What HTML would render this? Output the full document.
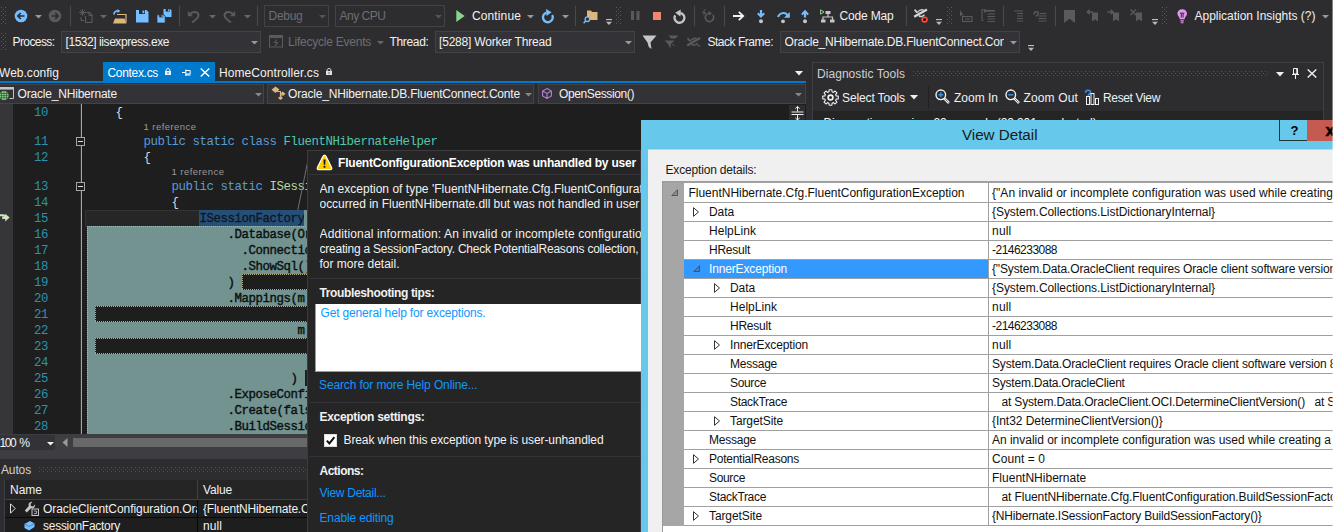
<!DOCTYPE html>
<html><head><meta charset="utf-8"><title>VS</title><style>
html,body{margin:0;padding:0;}
body{width:1335px;height:532px;overflow:hidden;background:#2d2d30;position:relative;font-family:"Liberation Sans", sans-serif;font-size:12px;}
#r{position:absolute;left:0;top:0;width:1335px;height:532px;overflow:hidden;}
#r div,#r span.t,#r svg{position:absolute;}
#r span.t{white-space:pre;}
#r div.c{overflow:hidden;}
#r span.m{font-family:"Liberation Mono", monospace;}
</style></head><body><div id="r">
<svg style="left:1px;top:7px" width="5" height="18" viewBox="0 0 5 18"><rect x="0" y="0" width="1" height="1" fill="#5c5c60"/><rect x="4" y="0" width="1" height="1" fill="#5c5c60"/><rect x="2" y="2" width="1" height="1" fill="#5c5c60"/><rect x="0" y="4" width="1" height="1" fill="#5c5c60"/><rect x="4" y="4" width="1" height="1" fill="#5c5c60"/><rect x="2" y="6" width="1" height="1" fill="#5c5c60"/><rect x="0" y="8" width="1" height="1" fill="#5c5c60"/><rect x="4" y="8" width="1" height="1" fill="#5c5c60"/><rect x="2" y="10" width="1" height="1" fill="#5c5c60"/><rect x="0" y="12" width="1" height="1" fill="#5c5c60"/><rect x="4" y="12" width="1" height="1" fill="#5c5c60"/><rect x="2" y="14" width="1" height="1" fill="#5c5c60"/><rect x="0" y="16" width="1" height="1" fill="#5c5c60"/><rect x="4" y="16" width="1" height="1" fill="#5c5c60"/></svg>
<div style="left:70px;top:6px;width:1px;height:20px;background:#4a4a4e;"></div>
<div style="left:179px;top:6px;width:1px;height:20px;background:#4a4a4e;"></div>
<div style="left:257px;top:6px;width:1px;height:20px;background:#4a4a4e;"></div>
<div style="left:264px;top:5px;width:63px;height:20px;background:#2d2d30;border:1px solid #434346;"></div>
<span class="t" id="t1" style="left:268.5px;top:8.0px;font-size:12px;line-height:16px;color:#6e6e70;letter-spacing:-0.275px;">Debug</span>
<svg style="left:319px;top:15px" width="7" height="4" viewBox="0 0 7 4"><path d="M0 0H7L3.5 3.5Z" fill="#555"/></svg>
<div style="left:335px;top:5px;width:108px;height:20px;background:#2d2d30;border:1px solid #434346;"></div>
<span class="t" id="t2" style="left:339.5px;top:8.0px;font-size:12px;line-height:16px;color:#6e6e70;letter-spacing:-0.480px;">Any CPU</span>
<svg style="left:435px;top:15px" width="7" height="4" viewBox="0 0 7 4"><path d="M0 0H7L3.5 3.5Z" fill="#555"/></svg>
<span class="t" id="t3" style="left:472px;top:8.0px;font-size:12px;line-height:16px;color:#f1f1f1;letter-spacing:0.119px;">Continue</span>
<svg style="left:527px;top:15px" width="7" height="4" viewBox="0 0 7 4"><path d="M0 0H7L3.5 3.5Z" fill="#999"/></svg>
<svg style="left:562px;top:15px" width="7" height="4" viewBox="0 0 7 4"><path d="M0 0H7L3.5 3.5Z" fill="#999"/></svg>
<div style="left:575px;top:6px;width:1px;height:20px;background:#4a4a4e;"></div>
<svg style="left:615.5px;top:7px" width="5" height="18" viewBox="0 0 5 18"><rect x="0" y="0" width="1" height="1" fill="#5c5c60"/><rect x="4" y="0" width="1" height="1" fill="#5c5c60"/><rect x="2" y="2" width="1" height="1" fill="#5c5c60"/><rect x="0" y="4" width="1" height="1" fill="#5c5c60"/><rect x="4" y="4" width="1" height="1" fill="#5c5c60"/><rect x="2" y="6" width="1" height="1" fill="#5c5c60"/><rect x="0" y="8" width="1" height="1" fill="#5c5c60"/><rect x="4" y="8" width="1" height="1" fill="#5c5c60"/><rect x="2" y="10" width="1" height="1" fill="#5c5c60"/><rect x="0" y="12" width="1" height="1" fill="#5c5c60"/><rect x="4" y="12" width="1" height="1" fill="#5c5c60"/><rect x="2" y="14" width="1" height="1" fill="#5c5c60"/><rect x="0" y="16" width="1" height="1" fill="#5c5c60"/><rect x="4" y="16" width="1" height="1" fill="#5c5c60"/></svg>
<div style="left:694px;top:6px;width:1px;height:20px;background:#4a4a4e;"></div>
<div style="left:724px;top:6px;width:1px;height:20px;background:#4a4a4e;"></div>
<span class="t" id="t4" style="left:839.5px;top:8.0px;font-size:12px;line-height:16px;color:#f1f1f1;letter-spacing:-0.172px;">Code Map</span>
<div style="left:906px;top:6px;width:1px;height:20px;background:#4a4a4e;"></div>
<svg style="left:947px;top:7px" width="5" height="18" viewBox="0 0 5 18"><rect x="0" y="0" width="1" height="1" fill="#5c5c60"/><rect x="4" y="0" width="1" height="1" fill="#5c5c60"/><rect x="2" y="2" width="1" height="1" fill="#5c5c60"/><rect x="0" y="4" width="1" height="1" fill="#5c5c60"/><rect x="4" y="4" width="1" height="1" fill="#5c5c60"/><rect x="2" y="6" width="1" height="1" fill="#5c5c60"/><rect x="0" y="8" width="1" height="1" fill="#5c5c60"/><rect x="4" y="8" width="1" height="1" fill="#5c5c60"/><rect x="2" y="10" width="1" height="1" fill="#5c5c60"/><rect x="0" y="12" width="1" height="1" fill="#5c5c60"/><rect x="4" y="12" width="1" height="1" fill="#5c5c60"/><rect x="2" y="14" width="1" height="1" fill="#5c5c60"/><rect x="0" y="16" width="1" height="1" fill="#5c5c60"/><rect x="4" y="16" width="1" height="1" fill="#5c5c60"/></svg>
<div style="left:1003px;top:6px;width:1px;height:20px;background:#4a4a4e;"></div>
<div style="left:1055px;top:6px;width:1px;height:20px;background:#4a4a4e;"></div>
<svg style="left:1162px;top:7px" width="5" height="18" viewBox="0 0 5 18"><rect x="0" y="0" width="1" height="1" fill="#5c5c60"/><rect x="4" y="0" width="1" height="1" fill="#5c5c60"/><rect x="2" y="2" width="1" height="1" fill="#5c5c60"/><rect x="0" y="4" width="1" height="1" fill="#5c5c60"/><rect x="4" y="4" width="1" height="1" fill="#5c5c60"/><rect x="2" y="6" width="1" height="1" fill="#5c5c60"/><rect x="0" y="8" width="1" height="1" fill="#5c5c60"/><rect x="4" y="8" width="1" height="1" fill="#5c5c60"/><rect x="2" y="10" width="1" height="1" fill="#5c5c60"/><rect x="0" y="12" width="1" height="1" fill="#5c5c60"/><rect x="4" y="12" width="1" height="1" fill="#5c5c60"/><rect x="2" y="14" width="1" height="1" fill="#5c5c60"/><rect x="0" y="16" width="1" height="1" fill="#5c5c60"/><rect x="4" y="16" width="1" height="1" fill="#5c5c60"/></svg>
<span class="t" id="t5" style="left:1194.5px;top:8.0px;font-size:12px;line-height:16px;color:#f1f1f1;letter-spacing:-0.017px;">Application Insights (?)</span>
<svg style="left:1322px;top:15px" width="7" height="4" viewBox="0 0 7 4"><path d="M0 0H7L3.5 3.5Z" fill="#999"/></svg>
<svg style="left:35px;top:15px" width="7" height="4" viewBox="0 0 7 4"><path d="M0 0H7L3.5 3.5Z" fill="#999"/></svg>
<svg style="left:100px;top:15px" width="7" height="4" viewBox="0 0 7 4"><path d="M0 0H7L3.5 3.5Z" fill="#666"/></svg>
<svg style="left:209px;top:15px" width="7" height="4" viewBox="0 0 7 4"><path d="M0 0H7L3.5 3.5Z" fill="#666"/></svg>
<svg style="left:244px;top:15px" width="7" height="4" viewBox="0 0 7 4"><path d="M0 0H7L3.5 3.5Z" fill="#666"/></svg>
<svg style="left:1px;top:33px" width="5" height="18" viewBox="0 0 5 18"><rect x="0" y="0" width="1" height="1" fill="#5c5c60"/><rect x="4" y="0" width="1" height="1" fill="#5c5c60"/><rect x="2" y="2" width="1" height="1" fill="#5c5c60"/><rect x="0" y="4" width="1" height="1" fill="#5c5c60"/><rect x="4" y="4" width="1" height="1" fill="#5c5c60"/><rect x="2" y="6" width="1" height="1" fill="#5c5c60"/><rect x="0" y="8" width="1" height="1" fill="#5c5c60"/><rect x="4" y="8" width="1" height="1" fill="#5c5c60"/><rect x="2" y="10" width="1" height="1" fill="#5c5c60"/><rect x="0" y="12" width="1" height="1" fill="#5c5c60"/><rect x="4" y="12" width="1" height="1" fill="#5c5c60"/><rect x="2" y="14" width="1" height="1" fill="#5c5c60"/><rect x="0" y="16" width="1" height="1" fill="#5c5c60"/><rect x="4" y="16" width="1" height="1" fill="#5c5c60"/></svg>
<span class="t" id="t6" style="left:12.5px;top:34.0px;font-size:12px;line-height:16px;color:#f1f1f1;letter-spacing:-0.586px;">Process:</span>
<div style="left:61px;top:31px;width:198px;height:20px;background:#333337;border:1px solid #434346;"></div>
<span class="t" id="t7" style="left:65.5px;top:34.0px;font-size:12px;line-height:16px;color:#f1f1f1;letter-spacing:-0.440px;">[1532] iisexpress.exe</span>
<svg style="left:251px;top:41px" width="7" height="4" viewBox="0 0 7 4"><path d="M0 0H7L3.5 3.5Z" fill="#999"/></svg>
<span class="t" id="t8" style="left:288px;top:34.0px;font-size:12px;line-height:16px;color:#6e6e70;letter-spacing:-0.232px;">Lifecycle Events</span>
<svg style="left:377px;top:41px" width="7" height="4" viewBox="0 0 7 4"><path d="M0 0H7L3.5 3.5Z" fill="#666"/></svg>
<span class="t" id="t9" style="left:389.5px;top:34.0px;font-size:12px;line-height:16px;color:#f1f1f1;letter-spacing:-0.337px;">Thread:</span>
<div style="left:435px;top:31px;width:198px;height:20px;background:#333337;border:1px solid #434346;"></div>
<span class="t" id="t10" style="left:439px;top:34.0px;font-size:12px;line-height:16px;color:#f1f1f1;letter-spacing:-0.190px;">[5288] Worker Thread</span>
<svg style="left:625px;top:41px" width="7" height="4" viewBox="0 0 7 4"><path d="M0 0H7L3.5 3.5Z" fill="#999"/></svg>
<span class="t" id="t11" style="left:707.5px;top:34.0px;font-size:12px;line-height:16px;color:#f1f1f1;letter-spacing:-0.488px;">Stack Frame:</span>
<div style="left:780px;top:31px;width:238px;height:20px;background:#333337;border:1px solid #434346;"></div>
<span class="t" id="t12" style="left:784.5px;top:34.0px;font-size:12px;line-height:16px;color:#f1f1f1;width:219.5px;overflow:hidden;letter-spacing:-0.205px;">Oracle_NHibernate.DB.FluentConnect.Context</span>
<svg style="left:1010px;top:41px" width="7" height="4" viewBox="0 0 7 4"><path d="M0 0H7L3.5 3.5Z" fill="#999"/></svg>
<span class="t" id="t13" style="left:-1px;top:65.0px;font-size:12px;line-height:16px;color:#f1f1f1;letter-spacing:0.019px;">Web.config</span>
<div style="left:103px;top:62px;width:112px;height:20px;background:#007acc;"></div>
<span class="t" id="t14" style="left:107.5px;top:65.0px;font-size:12px;line-height:16px;color:#fff;letter-spacing:-0.318px;">Contex.cs</span>
<span class="t" id="t15" style="left:219px;top:65.0px;font-size:12px;line-height:16px;color:#f1f1f1;letter-spacing:0.076px;">HomeController.cs</span>
<div style="left:0px;top:81px;width:806px;height:2px;background:#007acc;"></div>
<svg style="left:795px;top:71px" width="8" height="5" viewBox="0 0 8 5"><path d="M0 0H8L4.0 4.5Z" fill="#f1f1f1"/></svg>
<div style="left:0px;top:83px;width:806px;height:21px;background:#2d2d30;"></div>
<div style="left:-1px;top:84px;width:263px;height:18px;background:#333337;border:1px solid #434346;"></div>
<div style="left:267px;top:84px;width:265px;height:18px;background:#333337;border:1px solid #434346;"></div>
<div style="left:538px;top:84px;width:266px;height:18px;background:#333337;border:1px solid #434346;"></div>
<span class="t" id="t16" style="left:17.5px;top:86.0px;font-size:12px;line-height:16px;color:#f1f1f1;letter-spacing:-0.189px;">Oracle_NHibernate</span>
<svg style="left:255px;top:93px" width="7" height="4" viewBox="0 0 7 4"><path d="M0 0H7L3.5 3.5Z" fill="#888"/></svg>
<span class="t" id="t17" style="left:288px;top:86.0px;font-size:12px;line-height:16px;color:#f1f1f1;width:234px;overflow:hidden;letter-spacing:-0.187px;">Oracle_NHibernate.DB.FluentConnect.Conte</span>
<svg style="left:525px;top:93px" width="7" height="4" viewBox="0 0 7 4"><path d="M0 0H7L3.5 3.5Z" fill="#888"/></svg>
<span class="t" id="t18" style="left:559px;top:86.0px;font-size:12px;line-height:16px;color:#f1f1f1;letter-spacing:-0.388px;">OpenSession()</span>
<svg style="left:795px;top:93px" width="7" height="4" viewBox="0 0 7 4"><path d="M0 0H7L3.5 3.5Z" fill="#888"/></svg>
<div style="left:0px;top:104px;width:806px;height:330px;background:#1e1e1e;"></div>
<div style="left:0px;top:104px;width:13px;height:330px;background:#363638;"></div>
<div style="left:80px;top:104px;width:1px;height:330px;background:#2e2e2e;"></div>
<div style="left:81px;top:104px;width:1px;height:330px;background:#a6a6a6;"></div>
<div style="left:85px;top:210px;width:222px;height:15px;background:#262626;border:1px solid #333;border-right:none;"></div>
<div style="left:87px;top:226px;width:220px;height:208px;background:#739390;"></div>
<div style="left:87px;top:226px;width:1px;height:208px;background:repeating-linear-gradient(to bottom,#b9b48c 0,#b9b48c 1px,transparent 1px,transparent 2px);"></div>
<div style="left:87px;top:226px;width:220px;height:1px;background:repeating-linear-gradient(to right,#b9b48c 0,#b9b48c 1px,transparent 1px,transparent 2px);"></div>
<div style="left:242px;top:274px;width:66px;height:16px;background:#1e1e1e;"></div>
<div style="left:242px;top:274px;width:66px;height:1px;background:repeating-linear-gradient(to right,#b0a684 0,#b0a684 1px,transparent 1px,transparent 2px);"></div>
<div style="left:242px;top:289px;width:66px;height:1px;background:repeating-linear-gradient(to right,#b0a684 0,#b0a684 1px,transparent 1px,transparent 2px);"></div>
<div style="left:242px;top:274px;width:1px;height:16px;background:repeating-linear-gradient(to bottom,#b0a684 0,#b0a684 1px,transparent 1px,transparent 2px);"></div>
<div style="left:95px;top:306px;width:213px;height:16px;background:#1e1e1e;"></div>
<div style="left:95px;top:306px;width:213px;height:1px;background:repeating-linear-gradient(to right,#b0a684 0,#b0a684 1px,transparent 1px,transparent 2px);"></div>
<div style="left:95px;top:321px;width:213px;height:1px;background:repeating-linear-gradient(to right,#b0a684 0,#b0a684 1px,transparent 1px,transparent 2px);"></div>
<div style="left:95px;top:306px;width:1px;height:16px;background:repeating-linear-gradient(to bottom,#b0a684 0,#b0a684 1px,transparent 1px,transparent 2px);"></div>
<div style="left:95px;top:338px;width:213px;height:16px;background:#1e1e1e;"></div>
<div style="left:95px;top:338px;width:213px;height:1px;background:repeating-linear-gradient(to right,#b0a684 0,#b0a684 1px,transparent 1px,transparent 2px);"></div>
<div style="left:95px;top:353px;width:213px;height:1px;background:repeating-linear-gradient(to right,#b0a684 0,#b0a684 1px,transparent 1px,transparent 2px);"></div>
<div style="left:95px;top:338px;width:1px;height:16px;background:repeating-linear-gradient(to bottom,#b0a684 0,#b0a684 1px,transparent 1px,transparent 2px);"></div>
<div style="left:305px;top:370px;width:3px;height:16px;background:#1e1e1e;"></div>
<div style="left:199px;top:210px;width:105.5px;height:16px;background:#264f78;"></div>
<span class="t m" id="t19" style="left:34px;top:104.5px;font-size:12.4px;line-height:16px;color:#2b91af;letter-spacing:-0.438px;">10</span>
<span class="t m" id="t20" style="left:34px;top:133.5px;font-size:12.4px;line-height:16px;color:#2b91af;letter-spacing:-0.438px;">11</span>
<span class="t m" id="t21" style="left:34px;top:149.5px;font-size:12.4px;line-height:16px;color:#2b91af;letter-spacing:-0.438px;">12</span>
<span class="t m" id="t22" style="left:34px;top:178.5px;font-size:12.4px;line-height:16px;color:#2b91af;letter-spacing:-0.438px;">13</span>
<span class="t m" id="t23" style="left:34px;top:194.5px;font-size:12.4px;line-height:16px;color:#2b91af;letter-spacing:-0.438px;">14</span>
<span class="t m" id="t24" style="left:34px;top:210.5px;font-size:12.4px;line-height:16px;color:#2b91af;letter-spacing:-0.438px;">15</span>
<span class="t m" id="t25" style="left:34px;top:226.5px;font-size:12.4px;line-height:16px;color:#2b91af;letter-spacing:-0.438px;">16</span>
<span class="t m" id="t26" style="left:34px;top:242.5px;font-size:12.4px;line-height:16px;color:#2b91af;letter-spacing:-0.438px;">17</span>
<span class="t m" id="t27" style="left:34px;top:258.5px;font-size:12.4px;line-height:16px;color:#2b91af;letter-spacing:-0.438px;">18</span>
<span class="t m" id="t28" style="left:34px;top:274.5px;font-size:12.4px;line-height:16px;color:#2b91af;letter-spacing:-0.438px;">19</span>
<span class="t m" id="t29" style="left:34px;top:290.5px;font-size:12.4px;line-height:16px;color:#2b91af;letter-spacing:-0.438px;">20</span>
<span class="t m" id="t30" style="left:34px;top:306.5px;font-size:12.4px;line-height:16px;color:#2b91af;letter-spacing:-0.438px;">21</span>
<span class="t m" id="t31" style="left:34px;top:322.5px;font-size:12.4px;line-height:16px;color:#2b91af;letter-spacing:-0.438px;">22</span>
<span class="t m" id="t32" style="left:34px;top:338.5px;font-size:12.4px;line-height:16px;color:#2b91af;letter-spacing:-0.438px;">23</span>
<span class="t m" id="t33" style="left:34px;top:354.5px;font-size:12.4px;line-height:16px;color:#2b91af;letter-spacing:-0.438px;">24</span>
<span class="t m" id="t34" style="left:34px;top:370.5px;font-size:12.4px;line-height:16px;color:#2b91af;letter-spacing:-0.438px;">25</span>
<span class="t m" id="t35" style="left:34px;top:386.5px;font-size:12.4px;line-height:16px;color:#2b91af;letter-spacing:-0.438px;">26</span>
<span class="t m" id="t36" style="left:34px;top:402.5px;font-size:12.4px;line-height:16px;color:#2b91af;letter-spacing:-0.438px;">27</span>
<span class="t m" id="t37" style="left:34px;top:418.5px;font-size:12.4px;line-height:16px;color:#2b91af;letter-spacing:-0.438px;">28</span>
<span class="t m" id="t38" style="left:115.5px;top:104.5px;font-size:12.4px;line-height:16px;color:#dcdcdc;">{</span>
<span class="t" id="t39" style="left:143.5px;top:119.0px;font-size:9.5px;line-height:16px;color:#999;letter-spacing:0.449px;">1 reference</span>
<span class="t m" id="t40" style="left:143.5px;top:133.5px;font-size:12.4px;line-height:16px;color:#569cd6;letter-spacing:-0.436px;">public static class</span>
<span class="t m" id="t41" style="left:283.5px;top:133.5px;font-size:12.4px;line-height:16px;color:#4ec9b0;letter-spacing:-0.436px;">FluentNHibernateHelper</span>
<span class="t m" id="t42" style="left:143.5px;top:149.5px;font-size:12.4px;line-height:16px;color:#dcdcdc;">{</span>
<span class="t" id="t43" style="left:171.5px;top:164.0px;font-size:9.5px;line-height:16px;color:#999;letter-spacing:0.449px;">1 reference</span>
<span class="t m" id="t44" style="left:171.5px;top:178.5px;font-size:12.4px;line-height:16px;color:#569cd6;letter-spacing:-0.436px;">public static</span>
<span class="t m" id="t45" style="left:269.5px;top:178.5px;font-size:12.4px;line-height:16px;color:#b8d7a3;letter-spacing:-0.436px;">ISessionFactory</span>
<span class="t m" id="t46" style="left:171.5px;top:194.5px;font-size:12.4px;line-height:16px;color:#dcdcdc;">{</span>
<span class="t m" id="t47" style="left:199.5px;top:210.5px;font-size:12.4px;line-height:16px;color:#0c1624;-webkit-text-stroke:0.3px #0c1624;letter-spacing:-0.436px;">ISessionFactory</span>
<span class="t m" id="t48" style="left:227.5px;top:226.5px;font-size:12.4px;line-height:16px;color:#0a1010;-webkit-text-stroke:0.4px #0a1010;letter-spacing:-0.437px;">.Database(Oracle</span>
<span class="t m" id="t49" style="left:241.5px;top:242.5px;font-size:12.4px;line-height:16px;color:#0a1010;-webkit-text-stroke:0.4px #0a1010;letter-spacing:-0.436px;">.ConnectionS</span>
<span class="t m" id="t50" style="left:241.5px;top:258.5px;font-size:12.4px;line-height:16px;color:#0a1010;-webkit-text-stroke:0.4px #0a1010;letter-spacing:-0.436px;">.ShowSql()</span>
<span class="t m" id="t51" style="left:227.5px;top:274.5px;font-size:12.4px;line-height:16px;color:#0a1010;-webkit-text-stroke:0.4px #0a1010;">)</span>
<span class="t m" id="t52" style="left:227.5px;top:290.5px;font-size:12.4px;line-height:16px;color:#0a1010;-webkit-text-stroke:0.4px #0a1010;letter-spacing:-0.436px;">.Mappings(m =&gt;</span>
<span class="t m" id="t53" style="left:297.5px;top:322.5px;font-size:12.4px;line-height:16px;color:#0a1010;-webkit-text-stroke:0.4px #0a1010;letter-spacing:-0.438px;">m.F</span>
<span class="t m" id="t54" style="left:290.5px;top:370.5px;font-size:12.4px;line-height:16px;color:#0a1010;-webkit-text-stroke:0.4px #0a1010;">)</span>
<span class="t m" id="t55" style="left:227.5px;top:386.5px;font-size:12.4px;line-height:16px;color:#0a1010;-webkit-text-stroke:0.4px #0a1010;letter-spacing:-0.436px;">.ExposeConfiguration</span>
<span class="t m" id="t56" style="left:227.5px;top:402.5px;font-size:12.4px;line-height:16px;color:#0a1010;-webkit-text-stroke:0.4px #0a1010;letter-spacing:-0.436px;">.Create(false,</span>
<span class="t m" id="t57" style="left:227.5px;top:418.5px;font-size:12.4px;line-height:16px;color:#0a1010;-webkit-text-stroke:0.4px #0a1010;letter-spacing:-0.436px;">.BuildSessionFactory</span>
<div style="left:76px;top:137px;width:7px;height:7px;background:#1e1e1e;border:1px solid #a5a5a5;"></div>
<div style="left:78px;top:141px;width:5px;height:1px;background:#dcdcdc;"></div>
<div style="left:76px;top:182px;width:7px;height:7px;background:#1e1e1e;border:1px solid #a5a5a5;"></div>
<div style="left:78px;top:186px;width:5px;height:1px;background:#dcdcdc;"></div>
<div style="left:0px;top:434px;width:806px;height:16px;background:#3e3e42;"></div>
<div style="left:0px;top:435px;width:55px;height:15px;background:#333337;"></div>
<span class="t" id="t58" style="left:-0.5px;top:434.5px;font-size:12px;line-height:16px;color:#f1f1f1;letter-spacing:-1.410px;">100</span>
<span class="t" id="t59" style="left:19.2px;top:434.5px;font-size:12.2px;line-height:16px;color:#f1f1f1;">%</span>
<svg style="left:47px;top:442px" width="7" height="4" viewBox="0 0 7 4"><path d="M0 0H7L3.5 3.5Z" fill="#f1f1f1"/></svg>
<svg style="left:62px;top:438px" width="6" height="9" viewBox="0 0 6 9"><path d="M5.5 0V9L0.5 4.5Z" fill="#999"/></svg>
<div style="left:73px;top:438px;width:700px;height:9px;background:#686868;"></div>
<div style="left:0px;top:450px;width:806px;height:9px;background:#3e3e42;"></div>
<div style="left:0px;top:459px;width:806px;height:73px;background:#2d2d30;"></div>
<span class="t" id="t60" style="left:1px;top:462.0px;font-size:12px;line-height:16px;color:#d0d0d0;letter-spacing:-0.138px;">Autos</span>
<svg style="left:39px;top:467px" width="270" height="5" viewBox="0 0 270 5"><defs><pattern id="hg39_467" width="4" height="4" patternUnits="userSpaceOnUse"><rect x="0" y="0" width="1" height="1" fill="#505055"/><rect x="2" y="2" width="1" height="1" fill="#505055"/></pattern></defs><rect width="270" height="5" fill="url(#hg39_467)"/></svg>
<div style="left:5px;top:480px;width:801px;height:19px;background:#252526;"></div>
<div style="left:5px;top:500px;width:801px;height:32px;background:#1e1e1e;"></div>
<div style="left:4px;top:480px;width:1px;height:52px;background:#3f3f46;"></div>
<div style="left:5px;top:499px;width:801px;height:1px;background:#3f3f46;"></div>
<div style="left:197px;top:480px;width:1px;height:19px;background:#3f3f46;"></div>
<div style="left:197px;top:500px;width:1px;height:32px;background:#060606;"></div>
<span class="t" id="t61" style="left:10px;top:482.0px;font-size:12px;line-height:16px;color:#f1f1f1;letter-spacing:-0.004px;">Name</span>
<span class="t" id="t62" style="left:203px;top:482.0px;font-size:12px;line-height:16px;color:#f1f1f1;letter-spacing:-0.163px;">Value</span>
<div style="left:5px;top:517px;width:801px;height:1px;background:#0a0a0a;"></div>
<span class="t" id="t63" style="left:43px;top:500.5px;font-size:12px;line-height:16px;color:#f1f1f1;width:153.5px;overflow:hidden;letter-spacing:-0.056px;">OracleClientConfiguration.OracleClient</span>
<span class="t" id="t64" style="left:203px;top:500.5px;font-size:12px;line-height:16px;color:#f1f1f1;width:110px;overflow:hidden;letter-spacing:-0.188px;">{FluentNHibernate.Cfg</span>
<span class="t" id="t65" style="left:43px;top:518.0px;font-size:12px;line-height:16px;color:#f1f1f1;letter-spacing:-0.265px;">sessionFactory</span>
<span class="t" id="t66" style="left:203px;top:518.0px;font-size:12px;line-height:16px;color:#f1f1f1;letter-spacing:0.078px;">null</span>
<div style="left:812px;top:62px;width:510px;height:60px;background:#2d2d30;border:1px solid #3f3f46;"></div>
<span class="t" id="t67" style="left:817px;top:65.5px;font-size:12px;line-height:16px;color:#d0d0d0;letter-spacing:0.052px;">Diagnostic Tools</span>
<svg style="left:913px;top:71px" width="355" height="5" viewBox="0 0 355 5"><defs><pattern id="hg913_71" width="4" height="4" patternUnits="userSpaceOnUse"><rect x="0" y="0" width="1" height="1" fill="#505055"/><rect x="2" y="2" width="1" height="1" fill="#505055"/></pattern></defs><rect width="355" height="5" fill="url(#hg913_71)"/></svg>
<svg style="left:1276px;top:71.5px" width="8" height="5" viewBox="0 0 8 5"><path d="M0 0H8L4.0 4.5Z" fill="#f1f1f1"/></svg>
<span class="t" id="t68" style="left:842px;top:89.5px;font-size:12px;line-height:16px;color:#f1f1f1;letter-spacing:-0.124px;">Select Tools</span>
<svg style="left:910px;top:94.8px" width="8" height="5" viewBox="0 0 8 5"><path d="M0 0H8L4.0 4.5Z" fill="#f1f1f1"/></svg>
<div style="left:928px;top:86px;width:1px;height:22px;background:#202022;"></div>
<span class="t" id="t69" style="left:954px;top:89.5px;font-size:12px;line-height:16px;color:#f1f1f1;letter-spacing:-0.002px;">Zoom In</span>
<span class="t" id="t70" style="left:1023.5px;top:89.5px;font-size:12px;line-height:16px;color:#f1f1f1;letter-spacing:0.143px;">Zoom Out</span>
<span class="t" id="t71" style="left:1103px;top:89.5px;font-size:12px;line-height:16px;color:#f1f1f1;letter-spacing:-0.348px;">Reset View</span>
<div style="left:813px;top:111px;width:510px;height:12px;background:#252526;"></div>
<span class="t" id="t72" style="left:823.5px;top:115.2px;font-size:12px;line-height:16px;color:#fff;letter-spacing:-0.127px;">Diagnostics session: 22 seconds (22.201 s selected)</span>
<svg style="left:14px;top:9px" width="14" height="14" viewBox="0 0 14 14"><circle cx="7" cy="7" r="6.3" fill="#75beff"/><path d="M10.5 7H4M6.8 4L3.8 7L6.8 10" stroke="#2d2d30" stroke-width="1.7" fill="none"/></svg>
<svg style="left:48px;top:9px" width="14" height="14" viewBox="0 0 14 14"><circle cx="7" cy="7" r="6.3" fill="#5a5a5d"/><path d="M3.5 7H10M7.2 4L10.2 7L7.2 10" stroke="#2d2d30" stroke-width="1.7" fill="none"/></svg>
<svg style="left:79px;top:9px" width="14" height="14" viewBox="0 0 14 14"><path d="M6.5 3.5H10.5L13 6V13.5H6.5V7" fill="none" stroke="#5a5a5d" stroke-width="1.1"/><path d="M10 3.5V6.5H13" fill="none" stroke="#5a5a5d" stroke-width="1"/><path d="M3.5 0V7M0 3.5H7M1 1L6 6M6 1L1 6" stroke="#5a5a5d" stroke-width="0.9"/><path d="M2 8V11.5H5" stroke="#5a5a5d" fill="none" stroke-width="1"/></svg>
<svg style="left:112px;top:8.5px" width="16" height="15" viewBox="0 0 16 15"><path d="M5 5.5H14V13.5" fill="none" stroke="#dcb67a" stroke-width="1.2"/><path d="M3 9.5H12.5L14.5 14.5H1Z" fill="#dcb67a"/><path d="M2 5.5C2 2.5 4 1.8 6.5 1.8" stroke="#75beff" stroke-width="1.6" fill="none"/><path d="M5.5 0L8.3 2L5.5 4Z" fill="#75beff"/></svg>
<svg style="left:135.5px;top:9.5px" width="13" height="13" viewBox="0 0 13 13"><path d="M0 0H10.5L12.5 2V12.5H0Z" fill="#75beff"/><rect x="3" y="0" width="6" height="4" fill="#2d2d30"/><rect x="6.5" y="0.6" width="1.8" height="2.6" fill="#75beff"/></svg>
<svg style="left:157px;top:9px" width="15" height="14" viewBox="0 0 15 14"><path d="M6.5 0H13L14.5 1.3V8H6.5Z" fill="#75beff"/><rect x="8.7" y="0" width="4" height="2.6" fill="#2d2d30"/><rect x="11" y="0.4" width="1.2" height="1.7" fill="#75beff"/><path d="M0 5.8H6.6L8.2 7.2V14H0Z" fill="#75beff" stroke="#2d2d30" stroke-width="0.8"/><rect x="2.2" y="5.6" width="4" height="2.8" fill="#2d2d30"/><rect x="4.5" y="6" width="1.2" height="1.9" fill="#75beff"/></svg>
<svg style="left:187px;top:9px" width="14" height="14" viewBox="0 0 14 14"><path d="M2.5 5.5C6 1.5 11.5 2.5 11.5 6.5C11.5 9 8 11 5 13.5" fill="none" stroke="#5a5a5d" stroke-width="2"/><path d="M0.8 2V7.2H6Z" fill="#5a5a5d"/></svg>
<svg style="left:222px;top:9px" width="14" height="14" viewBox="0 0 14 14"><path d="M11.5 5.5C8 1.5 2.5 2.5 2.5 6.5C2.5 9 6 11 9 13.5" fill="none" stroke="#5a5a5d" stroke-width="2"/><path d="M13.2 2V7.2H8Z" fill="#5a5a5d"/></svg>
<svg style="left:455.5px;top:10px" width="9" height="12" viewBox="0 0 9 12"><path d="M0.3 0L8.7 6L0.3 12Z" fill="#8dd28a"/></svg>
<svg style="left:541px;top:9px" width="14" height="15" viewBox="0 0 14 15"><path d="M11.2 6A4.9 4.9 0 1 1 5.5 3.6" fill="none" stroke="#75beff" stroke-width="2.3"/><path d="M5 0L10.6 3.2L5.6 7Z" fill="#75beff"/></svg>
<svg style="left:583px;top:8.5px" width="15" height="15" viewBox="0 0 15 15"><path d="M4 1.5H8L9 3H14.5V11H4Z" fill="#dcb67a"/><circle cx="4.4" cy="10.2" r="2.3" fill="#2d2d30" stroke="#75beff" stroke-width="1.3"/><path d="M2.6 12L0.6 14.2" stroke="#75beff" stroke-width="1.5"/></svg>
<svg style="left:606px;top:19px" width="6" height="7" viewBox="0 0 6 7"><rect x="0" y="0" width="6" height="1.1" fill="#c0c0c0"/><path d="M0 2.8H6L3 6Z" fill="#b8b8b8"/></svg>
<svg style="left:936px;top:19px" width="6" height="7" viewBox="0 0 6 7"><rect x="0" y="0" width="6" height="1.1" fill="#c0c0c0"/><path d="M0 2.8H6L3 6Z" fill="#b8b8b8"/></svg>
<svg style="left:1152px;top:19px" width="6" height="7" viewBox="0 0 6 7"><rect x="0" y="0" width="6" height="1.1" fill="#c0c0c0"/><path d="M0 2.8H6L3 6Z" fill="#b8b8b8"/></svg>
<svg style="left:1027.5px;top:45px" width="6" height="7" viewBox="0 0 6 7"><rect x="0" y="0" width="6" height="1.1" fill="#c0c0c0"/><path d="M0 2.8H6L3 6Z" fill="#b8b8b8"/></svg>
<svg style="left:630.5px;top:11px" width="9" height="9" viewBox="0 0 9 9"><rect x="0" y="0" width="3" height="9" fill="#5a5a5d"/><rect x="5.5" y="0" width="3" height="9" fill="#5a5a5d"/></svg>
<div style="left:653px;top:12px;width:8px;height:8px;background:#f48771;"></div>
<svg style="left:671.5px;top:8.5px" width="14" height="15" viewBox="0 0 14 15"><path d="M3.2 6.4A4.9 4.9 0 1 0 8.2 4" fill="none" stroke="#c5c5c5" stroke-width="2.3"/><path d="M8.8 0.4L3.2 3.8L8.4 7.4Z" fill="#c5c5c5"/></svg>
<svg style="left:702px;top:9px" width="14" height="14" viewBox="0 0 14 14"><path d="M10.8 5.8A4.2 4.2 0 1 1 7 4.2" fill="none" stroke="#5a5a5d" stroke-width="1.6"/><path d="M6.5 2L10 4.3L6.8 6.6Z" fill="#5a5a5d"/><path d="M3.5 0L1 3.5H3L1.5 6" stroke="#5a5a5d" fill="none" stroke-width="1.1"/></svg>
<svg style="left:733px;top:11px" width="12" height="10" viewBox="0 0 12 10"><path d="M0 5H10M5.8 0.8L10.2 5L5.8 9.2" stroke="#f1f1f1" stroke-width="1.8" fill="none"/></svg>
<svg style="left:757px;top:10px" width="8" height="14" viewBox="0 0 8 14"><path d="M4 0V5.5" stroke="#75beff" stroke-width="2.2"/><path d="M0.8 3.2L4 6.6L7.2 3.2" stroke="#75beff" stroke-width="2" fill="none"/><circle cx="4" cy="11.2" r="2" fill="#c5c5c5"/></svg>
<svg style="left:777px;top:10px" width="14" height="14" viewBox="0 0 14 14"><path d="M1 7C2.5 2.5 8.5 1.5 11 6" stroke="#75beff" stroke-width="2" fill="none"/><path d="M12.8 2V7.8H7Z" fill="#75beff"/><circle cx="6" cy="11.3" r="1.9" fill="#c5c5c5"/></svg>
<svg style="left:800.7px;top:10px" width="8" height="14" viewBox="0 0 8 14"><path d="M4 2V7.5" stroke="#75beff" stroke-width="2.2"/><path d="M0.8 4.6L4 1.2L7.2 4.6" stroke="#75beff" stroke-width="2" fill="none"/><circle cx="4" cy="11.2" r="2" fill="#c5c5c5"/></svg>
<svg style="left:820px;top:9px" width="15" height="15" viewBox="0 0 15 15"><path d="M0.6 0.8L4 3L0.6 5.2Z" fill="none" stroke="#8dd28a" stroke-width="1"/><rect x="5.5" y="2" width="5" height="3" fill="#c5c5c5"/><path d="M8 5V8M3 11V8H12.5V11" stroke="#c5c5c5" fill="none" stroke-width="1.2"/><rect x="1" y="10.5" width="4.5" height="3" fill="#c5c5c5"/><rect x="10" y="10.5" width="4.5" height="3" fill="#c5c5c5"/></svg>
<svg style="left:913px;top:8px" width="16" height="17" viewBox="0 0 16 17"><path d="M1.2 8.8L14 1.4" stroke="#d8d8d8" stroke-width="2.3"/><path d="M1.6 1.6L4.2 4.8" stroke="#d0d0d0" stroke-width="1.8"/><path d="M4.4 4.6C5.6 2.2 8.6 1.2 10.6 2" stroke="#d0d0d0" stroke-width="1.5" fill="none"/><path d="M5.8 7.6C7.4 9.2 10 8.8 11.4 6.6" stroke="#d0d0d0" stroke-width="1.5" fill="none"/><circle cx="11.6" cy="11.6" r="3.2" fill="#ff4a3d"/><rect x="10.4" y="10.4" width="2.4" height="2.4" fill="#000"/></svg>
<svg style="left:959px;top:9px" width="14" height="14" viewBox="0 0 14 14"><path d="M1 1L1 7.5L3 5.8L5 7Z" fill="#5a5a5d"/><rect x="3.5" y="7.5" width="9.5" height="5" fill="none" stroke="#5a5a5d" stroke-width="1.1"/><path d="M6 10H11" stroke="#5a5a5d"/></svg>
<svg style="left:981px;top:9px" width="14" height="14" viewBox="0 0 14 14"><path d="M4.5 2V0.8H1V11.5H2.5" fill="none" stroke="#5a5a5d" stroke-width="1.1"/><path d="M3 1L5.5 2.5L3 4" fill="#5a5a5d"/><rect x="5" y="1" width="9" height="1.6" fill="#5a5a5d"/><path d="M6.5 5H14M6.5 7.5H14M6.5 10H14M6.5 12.5H14" stroke="#5a5a5d" stroke-width="1"/></svg>
<svg style="left:1014px;top:10px" width="10" height="12" viewBox="0 0 10 12"><path d="M0 1H9M3 3.5H9M3 6H9M3 8.5H9M3 11H9" stroke="#5a5a5d" stroke-width="1"/></svg>
<svg style="left:1033px;top:10px" width="14" height="12" viewBox="0 0 14 12"><path d="M1 4.5C1 1 5.5 1 5.5 3.5C5.5 5 3.5 5 3 6.5" fill="none" stroke="#5a5a5d" stroke-width="1.4"/><path d="M7 3.5H13.5M5.5 6H13.5M5.5 8.5H13.5M5.5 11H13.5" stroke="#5a5a5d" stroke-width="1"/></svg>
<svg style="left:1064px;top:10px" width="11" height="13" viewBox="0 0 11 13"><path d="M0 0H11V13L5.5 8.8L0 13Z" fill="#5a5a5d"/></svg>
<svg style="left:1086px;top:9px" width="13" height="13" viewBox="0 0 13 13"><path d="M6 3.5H12V12.5L9 10.2L6 12.5Z" fill="#5a5a5d"/><path d="M7 3H1.5M3.8 0.8L1.2 3L3.8 5.2" stroke="#5a5a5d" stroke-width="1.3" fill="none"/></svg>
<svg style="left:1107px;top:9px" width="13" height="13" viewBox="0 0 13 13"><path d="M6 3.5H12V12.5L9 10.2L6 12.5Z" fill="#5a5a5d"/><path d="M0.5 3H6M3.7 0.8L6.3 3L3.7 5.2" stroke="#5a5a5d" stroke-width="1.3" fill="none"/></svg>
<svg style="left:1130px;top:9px" width="13" height="13" viewBox="0 0 13 13"><path d="M6 3.5H12V12.5L9 10.2L6 12.5Z" fill="#5a5a5d"/><path d="M0.5 0.5L6 6M6 0.5L0.5 6" stroke="#5a5a5d" stroke-width="1.3" fill="none"/></svg>
<svg style="left:1177px;top:8.5px" width="11" height="15" viewBox="0 0 11 15"><path d="M5.2 0.3C2.3 0.3 0.4 2.4 0.4 4.6C0.4 6.8 2.4 7.6 2.9 10.2H7.5C8 7.6 10 6.8 10 4.6C10 2.4 8.1 0.3 5.2 0.3Z" fill="#e296f0"/><path d="M3 4.2H7.4M4.3 4.2V8.6M6.1 4.2V8.6" stroke="#2d2d30" stroke-width="1"/><path d="M3.4 11.9H6.8M3.7 13.8H6.5" stroke="#e296f0" stroke-width="1.1"/></svg>
<svg style="left:269px;top:35px" width="14" height="13" viewBox="0 0 14 13"><rect x="0.5" y="0.5" width="13" height="11.5" fill="none" stroke="#5a5a5d"/><rect x="0.5" y="0.5" width="13" height="2.5" fill="#5a5a5d"/><path d="M8 4.5L5.5 7.5H8.5L6 10.8" stroke="#5a5a5d" fill="none" stroke-width="1.1"/></svg>
<svg style="left:641.5px;top:34.5px" width="15" height="15" viewBox="0 0 15 15"><path d="M0.5 0.5H14.5L8.5 7.5L9.5 14L6.8 12L5.5 7.5Z" fill="#c5c5c5"/></svg>
<svg style="left:663.5px;top:34.5px" width="15" height="14" viewBox="0 0 15 14"><path d="M4.5 0.5H14.5L11.5 3.5H7Z" fill="#5a5a5d"/><path d="M0.5 5.5H10.5L6.5 9.5L7 13L5 11.5L4.5 9.5Z" fill="#5a5a5d"/><path d="M8 9L10.5 11" stroke="#5a5a5d"/></svg>
<svg style="left:685.5px;top:35.5px" width="16" height="12" viewBox="0 0 16 12"><path d="M1.2 9.4L14 2" stroke="#5a5a5d" stroke-width="2.3"/><path d="M1.6 2.2L4.2 5.4" stroke="#5a5a5d" stroke-width="1.8"/><path d="M4.4 5.2C5.6 2.8 8.6 1.8 10.6 2.6" stroke="#5a5a5d" stroke-width="1.5" fill="none"/><path d="M5.8 8.2C7.4 9.8 10 9.4 11.4 7.2" stroke="#5a5a5d" stroke-width="1.5" fill="none"/><path d="M11.6 8.8L14 10.4" stroke="#5a5a5d" stroke-width="1.4"/></svg>
<svg style="left:164.5px;top:68px" width="6" height="7" viewBox="0 0 6 7"><rect x="0" y="3" width="6" height="4" fill="#e8f2fa"/><path d="M1.2 3V1.6C1.2 0.2 4.8 0.2 4.8 1.6V3" fill="none" stroke="#e8f2fa" stroke-width="1"/><rect x="2.4" y="4.2" width="1.2" height="1.6" fill="#2d2d30" opacity="0.7"/></svg>
<svg style="left:325.5px;top:68px" width="6" height="7" viewBox="0 0 6 7"><rect x="0" y="3" width="6" height="4" fill="#e0e0e0"/><path d="M1.2 3V1.6C1.2 0.2 4.8 0.2 4.8 1.6V3" fill="none" stroke="#e0e0e0" stroke-width="1"/><rect x="2.4" y="4.2" width="1.2" height="1.6" fill="#2d2d30" opacity="0.7"/></svg>
<svg style="left:182px;top:68.5px" width="9" height="8" viewBox="0 0 9 8"><path d="M0 3.5H3.5M3.8 0.5V7M3.8 1.5H8.2V5H3.8M3.8 6H8.5" stroke="#fff" stroke-width="1" fill="none"/></svg>
<svg style="left:200px;top:68px" width="10" height="9" viewBox="0 0 10 9"><path d="M0.7 0.5L9.3 8.5M9.3 0.5L0.7 8.5" stroke="#fff" stroke-width="1.4"/></svg>
<svg style="left:0px;top:87px" width="15" height="14" viewBox="0 0 15 14"><path d="M0 0.5H13.5V11.5H9.5" fill="none" stroke="#c5c5c5" stroke-width="1"/><rect x="0" y="0" width="14" height="2.6" fill="#c5c5c5"/><circle cx="4" cy="8.6" r="4.6" fill="#8dd28a"/><path d="M4 4V13.2M-0.6 8.6H8.6M1.5 5V12.2M6.5 5V12.2M0 6.5H8M0 10.7H8" stroke="#2d5a2d" stroke-width="0.7" fill="none"/></svg>
<svg style="left:270.5px;top:86px" width="15" height="14" viewBox="0 0 15 14"><path d="M4.5 0.5L8.5 3.5L4.5 7L0.5 3.8Z" fill="#dcb67a"/><path d="M6 5.5H9.5V10H11" stroke="#dcb67a" fill="none" stroke-width="1.2"/><path d="M11.5 5.5L14.5 7.8L12 10L9.5 7.8Z" fill="#dcb67a"/><path d="M9.5 10L12 12L9.5 14L7 12Z" fill="#dcb67a"/></svg>
<svg style="left:542px;top:88px" width="10" height="11" viewBox="0 0 10 11"><path d="M5 0.6L9.4 3V8L5 10.4L0.6 8V3Z M0.6 3L5 5.4L9.4 3M5 5.4V10.4" fill="none" stroke="#b180d7" stroke-width="1.1"/></svg>
<div style="left:789px;top:105px;width:16px;height:15px;background:#2d2d30;"></div>
<svg style="left:790.5px;top:105.5px" width="13" height="14" viewBox="0 0 13 14"><path d="M0.5 6H12.5M0.5 8.5H12.5" stroke="#f1f1f1" stroke-width="1.1"/><path d="M6.5 0.5V5.5M4.3 2.6L6.5 0.5L8.7 2.6M6.5 9V14M4.3 11.9L6.5 14L8.7 11.9" stroke="#f1f1f1" stroke-width="1" fill="none"/></svg>
<svg style="left:0px;top:213px" width="10" height="9" viewBox="0 0 10 9"><path d="M0 2.2H2.5C4.8 2.2 5.4 3.4 5.4 4.6" fill="none" stroke="#cfe6bd" stroke-width="2"/><path d="M5.2 0.8L9.6 4.6L5.2 8.4V6H2.2V3.4H5.2Z" fill="#cfe6bd"/></svg>
<svg style="left:10px;top:503px" width="6" height="11" viewBox="0 0 6 11"><path d="M0.5 0.8L5.2 5.5L0.5 10.2Z" fill="none" stroke="#e0e0e0" stroke-width="1"/></svg>
<svg style="left:24px;top:501px" width="15" height="15" viewBox="0 0 15 15"><path d="M8.5 0.8C6 0.3 3.8 2.5 4.8 5L0.8 9.5L2.8 11.5L7 7.3C9.5 8 11.5 6 11 3.5L9 5.5L7 5L6.5 3Z" fill="#c5c5c5"/><rect x="8" y="8" width="6.5" height="6.5" fill="#252526" stroke="#c5c5c5" stroke-width="1"/><path d="M10 10H12.5V12.5H10" stroke="#c5c5c5" stroke-width="0.8" fill="none"/></svg>
<svg style="left:24px;top:520px" width="11" height="11" viewBox="0 0 11 11"><path d="M0.5 4L6 1L10.5 3.5V7L5 10.5L0.5 8Z" fill="#75beff"/><path d="M0.5 4L5 6.5L10.5 3.5" stroke="#3a7ab8" stroke-width="0.8" fill="none"/></svg>
<svg style="left:822px;top:88.5px" width="17" height="17" viewBox="0 0 17 17"><path d="M14.19 6.94L16.28 7.14L16.28 9.86L14.19 10.06L13.62 11.42L14.96 13.04L13.04 14.96L11.42 13.62L10.06 14.19L9.86 16.28L7.14 16.28L6.94 14.19L5.58 13.62L3.96 14.96L2.04 13.04L3.38 11.42L2.81 10.06L0.72 9.86L0.72 7.14L2.81 6.94L3.38 5.58L2.04 3.96L3.96 2.04L5.58 3.38L6.94 2.81L7.14 0.72L9.86 0.72L10.06 2.81L11.42 3.38L13.04 2.04L14.96 3.96L13.62 5.58Z" fill="none" stroke="#f1f1f1" stroke-width="1.1" stroke-linejoin="round"/><circle cx="8.5" cy="8.5" r="2.4" fill="none" stroke="#f1f1f1" stroke-width="1.7"/></svg>
<svg style="left:934.7px;top:89px" width="15" height="15" viewBox="0 0 15 15"><circle cx="5.8" cy="5.8" r="4.8" fill="#2d2d30" stroke="#f1f1f1" stroke-width="1.4"/><path d="M9.3 9.3L14 14" stroke="#f1f1f1" stroke-width="2.6"/><path d="M9.8 9.8L13.6 13.6" stroke="#555" stroke-width="0.8"/><path d="M3.3 5.8H8.3" stroke="#3a8ee6" stroke-width="1.5"/><path d="M5.8 3.3V8.3" stroke="#3a8ee6" stroke-width="1.5"/></svg>
<svg style="left:1005px;top:89.3px" width="15" height="15" viewBox="0 0 15 15"><circle cx="5.8" cy="5.8" r="4.8" fill="#2d2d30" stroke="#f1f1f1" stroke-width="1.4"/><path d="M9.3 9.3L14 14" stroke="#f1f1f1" stroke-width="2.6"/><path d="M9.8 9.8L13.6 13.6" stroke="#555" stroke-width="0.8"/><path d="M3.3 5.8H8.3" stroke="#3a8ee6" stroke-width="1.5"/></svg>
<svg style="left:1084px;top:89px" width="16" height="16" viewBox="0 0 16 16"><path d="M1.5 3.8C1.5 0.5 6.5 0.5 6.5 3.2C6.5 5 4.2 5 4.2 6.8" fill="none" stroke="#3a8ee6" stroke-width="1.6"/><rect x="2.5" y="7.5" width="3" height="8" fill="none" stroke="#f1f1f1"/><rect x="7" y="4.5" width="3" height="11" fill="none" stroke="#f1f1f1"/><rect x="11.5" y="9.5" width="3" height="6" fill="none" stroke="#f1f1f1"/></svg>
<svg style="left:1292px;top:68px" width="7" height="11" viewBox="0 0 7 11"><path d="M1.5 0.5H5.5V6H1.5ZM0 6.5H7M3.5 6.5V11M4.8 0.5V6" stroke="#f1f1f1" stroke-width="1" fill="none"/></svg>
<svg style="left:1307px;top:68.5px" width="10" height="9" viewBox="0 0 10 9"><path d="M0.7 0.5L9.3 8.5M9.3 0.5L0.7 8.5" stroke="#f1f1f1" stroke-width="1.4"/></svg>
<svg style="left:296px;top:162px" width="13" height="49" viewBox="0 0 13 49"><path d="M11.3 1.5L1.8 48" stroke="#707070" stroke-width="1" fill="none"/></svg>
<div style="left:304px;top:210px;width:3px;height:16px;background:#739390;"></div>
<div style="left:307px;top:150px;width:334px;height:400px;background:#252526;border:1px solid #3c3c40;box-sizing:border-box;"></div>
<div style="left:309px;top:174px;width:332px;height:1px;background:#333337;"></div>
<div style="left:309px;top:278px;width:332px;height:1px;background:#333337;"></div>
<div style="left:309px;top:402px;width:332px;height:1px;background:#333337;"></div>
<div style="left:309px;top:456px;width:332px;height:1px;background:#333337;"></div>
<svg style="left:315.5px;top:153.5px" width="17" height="17" viewBox="0 0 17 17"><path d="M8.5 1.2C9.3 1.2 9.6 1.7 10 2.4L15.6 13.4C16.2 14.6 15.6 15.6 14.4 15.6H2.6C1.4 15.6 0.8 14.6 1.4 13.4L7 2.4C7.4 1.7 7.7 1.2 8.5 1.2Z" fill="#ffcc00" stroke="#fff" stroke-width="1.2"/><path d="M7.5 5.5H9.5L9.2 10.8H7.8Z" fill="#111"/><rect x="7.6" y="11.8" width="1.8" height="1.9" fill="#111"/></svg>
<span class="t" id="t73" style="left:338px;top:155.0px;font-size:12px;line-height:16px;color:#fff;font-weight:bold;width:299.5px;overflow:hidden;letter-spacing:-0.201px;">FluentConfigurationException was unhandled by user code</span>
<span class="t" id="t74" style="left:319.5px;top:181.0px;font-size:12px;line-height:16px;color:#f1f1f1;width:321px;overflow:hidden;letter-spacing:0.015px;">An exception of type &#x27;FluentNHibernate.Cfg.FluentConfigurationException&#x27;</span>
<span class="t" id="t75" style="left:319.5px;top:196.0px;font-size:12px;line-height:16px;color:#f1f1f1;width:321px;overflow:hidden;letter-spacing:-0.040px;">occurred in FluentNHibernate.dll but was not handled in user code</span>
<span class="t" id="t76" style="left:319.5px;top:226.0px;font-size:12px;line-height:16px;color:#f1f1f1;width:321px;overflow:hidden;letter-spacing:0.133px;">Additional information: An invalid or incomplete configuration was used while</span>
<span class="t" id="t77" style="left:319.5px;top:241.0px;font-size:12px;line-height:16px;color:#f1f1f1;width:321px;overflow:hidden;letter-spacing:-0.227px;">creating a SessionFactory. Check PotentialReasons collection, and InnerException</span>
<span class="t" id="t78" style="left:319.5px;top:256.0px;font-size:12px;line-height:16px;color:#f1f1f1;letter-spacing:-0.003px;">for more detail.</span>
<span class="t" id="t79" style="left:319.5px;top:285.0px;font-size:12px;line-height:16px;color:#f1f1f1;font-weight:bold;letter-spacing:-0.365px;">Troubleshooting tips:</span>
<div style="left:315px;top:304px;width:326px;height:68px;background:#fff;border-bottom:1px solid #9a9a9a;border-left:1px solid #9a9a9a;box-sizing:border-box;"></div>
<span class="t" id="t80" style="left:320.5px;top:305.0px;font-size:12px;line-height:16px;color:#0e97ff;letter-spacing:-0.160px;">Get general help for exceptions.</span>
<span class="t" id="t81" style="left:319px;top:377.0px;font-size:12px;line-height:16px;color:#0e97ff;letter-spacing:-0.119px;">Search for more Help Online...</span>
<span class="t" id="t82" style="left:319.5px;top:409.0px;font-size:12px;line-height:16px;color:#f1f1f1;font-weight:bold;letter-spacing:-0.299px;">Exception settings:</span>
<div style="left:324px;top:433.5px;width:13px;height:13px;background:#fff;border:1px solid #ddd;box-sizing:border-box;"></div>
<svg style="left:324px;top:433.5px" width="13" height="13" viewBox="0 0 13 13"><path d="M2.8 6.6L5.4 9.4L10.4 3.2" stroke="#111" stroke-width="2" fill="none"/></svg>
<span class="t" id="t83" style="left:343.5px;top:431.5px;font-size:12px;line-height:16px;color:#f1f1f1;letter-spacing:-0.101px;">Break when this exception type is user-unhandled</span>
<span class="t" id="t84" style="left:319.5px;top:463.0px;font-size:12px;line-height:16px;color:#f1f1f1;font-weight:bold;letter-spacing:-0.500px;">Actions:</span>
<span class="t" id="t85" style="left:319.5px;top:484.5px;font-size:12px;line-height:16px;color:#0e97ff;letter-spacing:-0.272px;">View Detail...</span>
<span class="t" id="t86" style="left:319.5px;top:510.0px;font-size:12px;line-height:16px;color:#0e97ff;letter-spacing:-0.147px;">Enable editing</span>
<div style="left:641px;top:120px;width:694px;height:412px;background:#66c8ea;"></div>
<div style="left:648px;top:149px;width:687px;height:1px;background:#a9dcef;"></div>
<div style="left:648px;top:150px;width:687px;height:382px;background:#f0f0f0;"></div>
<span class="t" id="t87" style="left:962px;top:125.0px;font-size:15.2px;line-height:20px;color:#1a1a1a;letter-spacing:-0.018px;">View Detail</span>
<div style="left:1279px;top:120px;width:28px;height:21px;background:#66c8ea;border-left:1px solid #23333a;border-bottom:1px solid #23333a;box-sizing:border-box;"></div>
<span class="t" id="t88" style="left:1290.5px;top:122.5px;font-size:13px;line-height:16px;color:#000;font-weight:bold;">?</span>
<div style="left:1307px;top:120px;width:28px;height:21px;background:#c45a50;"></div>
<span class="t" id="t89" style="left:1325.5px;top:121.5px;font-size:16.5px;line-height:16px;color:#000;font-weight:bold;-webkit-text-stroke:0.5px #000;">x</span>
<span class="t" id="t90" style="left:665.5px;top:162.0px;font-size:12px;line-height:16px;color:#1a1a1a;letter-spacing:-0.170px;">Exception details:</span>
<div style="left:662px;top:181px;width:673px;height:351px;background:#fff;"></div>
<div style="left:662px;top:181px;width:673px;height:2px;background:#a0a0a0;"></div>
<div style="left:662px;top:181px;width:1px;height:351px;background:#9a9a9a;"></div>
<div style="left:663px;top:183px;width:21px;height:343px;background:#a6a6a6;"></div>
<div style="left:684px;top:202px;width:651px;height:1px;background:#a0a0a0;"></div>
<span class="t" id="t91" style="left:688.5px;top:184.5px;font-size:12px;line-height:16px;color:#111;letter-spacing:-0.017px;">FluentNHibernate.Cfg.FluentConfigurationException</span>
<svg style="left:671px;top:189.0px" width="8" height="8" viewBox="0 0 8 8"><path d="M6.5 0.8V6.5H0.8Z" fill="#555" stroke="#444" stroke-width="0.8" fill-opacity="0.25"/></svg>
<span class="t" id="t92" style="left:992px;top:184.5px;font-size:12px;line-height:16px;color:#111;width:341px;overflow:hidden;letter-spacing:0.040px;">{&quot;An invalid or incomplete configuration was used while creating a SessionFactory</span>
<div style="left:684px;top:221px;width:651px;height:1px;background:#a0a0a0;"></div>
<span class="t" id="t93" style="left:709px;top:203.5px;font-size:12px;line-height:16px;color:#111;letter-spacing:-0.090px;">Data</span>
<svg style="left:692.5px;top:206.5px" width="7" height="10" viewBox="0 0 7 10"><path d="M0.5 0.7L5.5 5L0.5 9.3Z" fill="none" stroke="#333" stroke-width="1"/></svg>
<span class="t" id="t94" style="left:992px;top:203.5px;font-size:12px;line-height:16px;color:#111;width:341px;overflow:hidden;letter-spacing:-0.057px;">{System.Collections.ListDictionaryInternal}</span>
<div style="left:684px;top:240px;width:651px;height:1px;background:#a0a0a0;"></div>
<span class="t" id="t95" style="left:709px;top:222.5px;font-size:12px;line-height:16px;color:#111;letter-spacing:0.037px;">HelpLink</span>
<span class="t" id="t96" style="left:992px;top:222.5px;font-size:12px;line-height:16px;color:#111;width:341px;overflow:hidden;letter-spacing:0.203px;">null</span>
<div style="left:684px;top:259px;width:651px;height:1px;background:#a0a0a0;"></div>
<span class="t" id="t97" style="left:709px;top:241.5px;font-size:12px;line-height:16px;color:#111;letter-spacing:-0.241px;">HResult</span>
<span class="t" id="t98" style="left:992px;top:241.5px;font-size:12px;line-height:16px;color:#111;width:341px;overflow:hidden;letter-spacing:-0.521px;">-2146233088</span>
<div style="left:684px;top:278px;width:651px;height:1px;background:#a0a0a0;"></div>
<div style="left:684px;top:260px;width:304px;height:18px;background:#3399ff;"></div>
<span class="t" id="t99" style="left:709px;top:260.5px;font-size:12px;line-height:16px;color:#fff;letter-spacing:-0.147px;">InnerException</span>
<svg style="left:692.5px;top:265.0px" width="8" height="8" viewBox="0 0 8 8"><path d="M6.5 0.8V6.5H0.8Z" fill="#555" stroke="#444" stroke-width="0.8" fill-opacity="0.25"/></svg>
<span class="t" id="t100" style="left:992px;top:260.5px;font-size:12px;line-height:16px;color:#111;width:341px;overflow:hidden;letter-spacing:-0.147px;">{&quot;System.Data.OracleClient requires Oracle client software version 8.1.7</span>
<div style="left:684px;top:297px;width:651px;height:1px;background:#a0a0a0;"></div>
<span class="t" id="t101" style="left:730px;top:279.5px;font-size:12px;line-height:16px;color:#111;letter-spacing:-0.090px;">Data</span>
<svg style="left:713.5px;top:282.5px" width="7" height="10" viewBox="0 0 7 10"><path d="M0.5 0.7L5.5 5L0.5 9.3Z" fill="none" stroke="#333" stroke-width="1"/></svg>
<span class="t" id="t102" style="left:992px;top:279.5px;font-size:12px;line-height:16px;color:#111;width:341px;overflow:hidden;letter-spacing:-0.057px;">{System.Collections.ListDictionaryInternal}</span>
<div style="left:684px;top:316px;width:651px;height:1px;background:#a0a0a0;"></div>
<span class="t" id="t103" style="left:730px;top:298.5px;font-size:12px;line-height:16px;color:#111;letter-spacing:0.037px;">HelpLink</span>
<span class="t" id="t104" style="left:992px;top:298.5px;font-size:12px;line-height:16px;color:#111;width:341px;overflow:hidden;letter-spacing:0.203px;">null</span>
<div style="left:684px;top:335px;width:651px;height:1px;background:#a0a0a0;"></div>
<span class="t" id="t105" style="left:730px;top:317.5px;font-size:12px;line-height:16px;color:#111;letter-spacing:-0.241px;">HResult</span>
<span class="t" id="t106" style="left:992px;top:317.5px;font-size:12px;line-height:16px;color:#111;width:341px;overflow:hidden;letter-spacing:-0.521px;">-2146233088</span>
<div style="left:684px;top:354px;width:651px;height:1px;background:#a0a0a0;"></div>
<span class="t" id="t107" style="left:730px;top:336.5px;font-size:12px;line-height:16px;color:#111;letter-spacing:-0.147px;">InnerException</span>
<svg style="left:713.5px;top:339.5px" width="7" height="10" viewBox="0 0 7 10"><path d="M0.5 0.7L5.5 5L0.5 9.3Z" fill="none" stroke="#333" stroke-width="1"/></svg>
<span class="t" id="t108" style="left:992px;top:336.5px;font-size:12px;line-height:16px;color:#111;width:341px;overflow:hidden;letter-spacing:0.203px;">null</span>
<div style="left:684px;top:373px;width:651px;height:1px;background:#a0a0a0;"></div>
<span class="t" id="t109" style="left:730px;top:355.5px;font-size:12px;line-height:16px;color:#111;letter-spacing:-0.243px;">Message</span>
<span class="t" id="t110" style="left:992px;top:355.5px;font-size:12px;line-height:16px;color:#111;width:341px;overflow:hidden;letter-spacing:-0.171px;">System.Data.OracleClient requires Oracle client software version 8.1.7</span>
<div style="left:684px;top:392px;width:651px;height:1px;background:#a0a0a0;"></div>
<span class="t" id="t111" style="left:730px;top:374.5px;font-size:12px;line-height:16px;color:#111;letter-spacing:-0.339px;">Source</span>
<span class="t" id="t112" style="left:992px;top:374.5px;font-size:12px;line-height:16px;color:#111;width:341px;overflow:hidden;letter-spacing:-0.223px;">System.Data.OracleClient</span>
<div style="left:684px;top:411px;width:651px;height:1px;background:#a0a0a0;"></div>
<span class="t" id="t113" style="left:730px;top:393.5px;font-size:12px;line-height:16px;color:#111;letter-spacing:-0.325px;">StackTrace</span>
<span class="t" id="t114" style="left:1001.5px;top:393.5px;font-size:12px;line-height:16px;color:#111;width:331.5px;overflow:hidden;letter-spacing:-0.178px;">at System.Data.OracleClient.OCI.DetermineClientVersion()   at System</span>
<div style="left:684px;top:430px;width:651px;height:1px;background:#a0a0a0;"></div>
<span class="t" id="t115" style="left:730px;top:412.5px;font-size:12px;line-height:16px;color:#111;letter-spacing:-0.103px;">TargetSite</span>
<svg style="left:713.5px;top:415.5px" width="7" height="10" viewBox="0 0 7 10"><path d="M0.5 0.7L5.5 5L0.5 9.3Z" fill="none" stroke="#333" stroke-width="1"/></svg>
<span class="t" id="t116" style="left:992px;top:412.5px;font-size:12px;line-height:16px;color:#111;width:341px;overflow:hidden;letter-spacing:-0.047px;">{Int32 DetermineClientVersion()}</span>
<div style="left:684px;top:449px;width:651px;height:1px;background:#a0a0a0;"></div>
<span class="t" id="t117" style="left:709px;top:431.5px;font-size:12px;line-height:16px;color:#111;letter-spacing:-0.243px;">Message</span>
<span class="t" id="t118" style="left:992px;top:431.5px;font-size:12px;line-height:16px;color:#111;width:341px;overflow:hidden;letter-spacing:-0.019px;">An invalid or incomplete configuration was used while creating a SessionFactory</span>
<div style="left:684px;top:468px;width:651px;height:1px;background:#a0a0a0;"></div>
<span class="t" id="t119" style="left:709px;top:450.5px;font-size:12px;line-height:16px;color:#111;letter-spacing:-0.254px;">PotentialReasons</span>
<svg style="left:692.5px;top:453.5px" width="7" height="10" viewBox="0 0 7 10"><path d="M0.5 0.7L5.5 5L0.5 9.3Z" fill="none" stroke="#333" stroke-width="1"/></svg>
<span class="t" id="t120" style="left:992px;top:450.5px;font-size:12px;line-height:16px;color:#111;width:341px;overflow:hidden;letter-spacing:0.069px;">Count = 0</span>
<div style="left:684px;top:487px;width:651px;height:1px;background:#a0a0a0;"></div>
<span class="t" id="t121" style="left:709px;top:469.5px;font-size:12px;line-height:16px;color:#111;letter-spacing:-0.339px;">Source</span>
<span class="t" id="t122" style="left:992px;top:469.5px;font-size:12px;line-height:16px;color:#111;width:341px;overflow:hidden;letter-spacing:0.015px;">FluentNHibernate</span>
<div style="left:684px;top:506px;width:651px;height:1px;background:#a0a0a0;"></div>
<span class="t" id="t123" style="left:709px;top:488.5px;font-size:12px;line-height:16px;color:#111;letter-spacing:-0.325px;">StackTrace</span>
<span class="t" id="t124" style="left:1001.5px;top:488.5px;font-size:12px;line-height:16px;color:#111;width:331.5px;overflow:hidden;letter-spacing:-0.084px;">at FluentNHibernate.Cfg.FluentConfiguration.BuildSessionFactory()</span>
<div style="left:684px;top:525px;width:651px;height:1px;background:#a0a0a0;"></div>
<span class="t" id="t125" style="left:709px;top:507.5px;font-size:12px;line-height:16px;color:#111;letter-spacing:-0.103px;">TargetSite</span>
<svg style="left:692.5px;top:510.5px" width="7" height="10" viewBox="0 0 7 10"><path d="M0.5 0.7L5.5 5L0.5 9.3Z" fill="none" stroke="#333" stroke-width="1"/></svg>
<span class="t" id="t126" style="left:992px;top:507.5px;font-size:12px;line-height:16px;color:#111;width:341px;overflow:hidden;letter-spacing:-0.184px;">{NHibernate.ISessionFactory BuildSessionFactory()}</span>
<div style="left:988px;top:183px;width:1px;height:343px;background:#a0a0a0;"></div>
<div style="left:1332px;top:0px;width:1px;height:532px;background:rgba(255,255,255,0.4);"></div>
<div style="left:1333px;top:0px;width:2px;height:532px;background:#fff;"></div>
</div></body></html>
